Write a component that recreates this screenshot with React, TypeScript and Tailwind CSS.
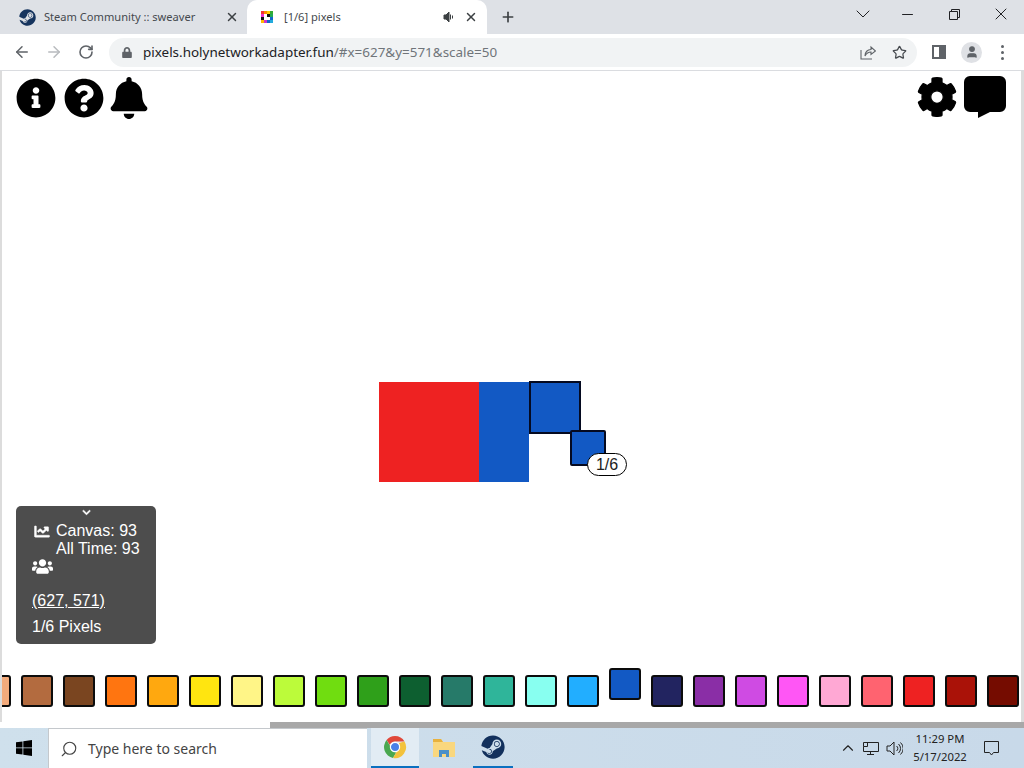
import React from "react";
import { FaInfoCircle, FaQuestionCircle, FaBell, FaCog, FaChartLine, FaUsers, FaChevronDown, FaSteam, FaLock } from "react-icons/fa";
import { Star, RotateCw, ArrowLeft, ArrowRight, X, Plus, ChevronDown, Minus, Search, User, ChevronUp } from "lucide-react";

const colors = ["#f3ab7c","#b36b3f","#7a4520","#ff7510","#ffa80f","#ffe510","#fff587","#bcfb3a","#70dd10","#2fa01a","#0d5f30","#267a69","#2fb59a","#88fff0","#22aeff","#1259c4","#222460","#8a2ea6","#cf4be3","#ff56f5","#ffa8d4","#ff6370","#ee2222","#aa1208","#750c00"];

function ChromeLogo() {
  return (
    <svg width="24" height="24" viewBox="0 0 24 24">
      <path d="M12 1a11 11 0 0 1 9.500 5.500H12a5.500 5.500 0 0 0-5.200 3.600L3.600 5A11 11 0 0 1 12 1z" fill="#e0483a" />
      <path d="M3.600 5l4.800 8.300a5.500 5.500 0 0 0 4.800 4.100L10 22.900A11 11 0 0 1 3.600 5z" fill="#4aa84f" />
      <path d="M21.500 6.500A11 11 0 0 1 10 22.900l4.800-8.200A5.500 5.500 0 0 0 15.800 8z" fill="#f3c23c" />
      <circle cx="12" cy="12" r="4.600" fill="#4a80e8" stroke="#fff" strokeWidth="1.200" />
    </svg>
  );
}

function Favicon() {
  const c = ["#e33","#f80","#fc0","#3a3","#e3c","#fff","#111","#2a5","#111","#fff","#fff","#16c","#fb0","#c3c","#16c","#2ad"];
  return (
    <div className="grid grid-cols-4 w-3 h-3">
      {c.map((x, i) => <div key={i} style={{ background: x }} />)}
    </div>
  );
}

export default function App() {
  return (
    <div className="w-[1024px] h-[768px] flex flex-col overflow-hidden bg-white font-['Noto_Sans','Open_Sans',sans-serif]">
      {/* tab strip */}
      <div className="h-[34px] shrink-0 flex items-center bg-[#dee1e6] text-[11.1px] text-[#45494e]">
        <div className="w-[247px] h-full flex items-center pl-[19px] pr-[8px]">
          <FaSteam className="w-[17px] h-[17px] text-[#16345e]" />
          <span className="ml-2 flex-1 truncate">Steam Community :: sweaver</span>
          <X className="w-[14px] h-[14px] text-[#3c4043]" strokeWidth={2.5} />
        </div>
        <div className="w-[240px] h-full flex items-center pl-[14px] pr-[9px] bg-white rounded-t-[10px]">
          <Favicon />
          <span className="ml-[11px] flex-1">[1/6] pixels</span>
          <svg width="12" height="12" viewBox="0 0 12 12" className="mr-[9px] text-[#3c4043]">
            <path d="M1 4h2l3-3v10L3 8H1z M7.500 3.500v5 M9.500 4.500v3" fill="currentColor" stroke="currentColor" strokeWidth="1" />
          </svg>
          <X className="w-[14px] h-[14px] text-[#3c4043]" strokeWidth={2.5} />
        </div>
        <Plus className="ml-[13px] w-4 h-4 text-[#3c4043]" strokeWidth={2.5} />
        <div className="ml-auto flex items-center text-[#202124] -mt-[6px]">
          <ChevronDown className="w-6 h-6 mr-[24px]" strokeWidth={1} />
          <Minus className="w-[17px] h-[17px] mr-[33px]" strokeWidth={1.5} />
          <svg width="11" height="11" viewBox="0 0 11 11" className="mr-[31px]" fill="none" stroke="currentColor">
            <path d="M.5 2.500h8v8h-8z M2.500 2.500v-2h8v8h-2" />
          </svg>
          <X className="w-5 h-5 mr-[13px]" strokeWidth={1.2} />
        </div>
      </div>
      {/* toolbar */}
      <div className="h-[37px] shrink-0 flex items-center bg-white border-b border-[#dadce0] text-[#5f6368]">
        <ArrowLeft className="ml-[13px] w-[18px] h-[18px]" strokeWidth={2} />
        <ArrowRight className="ml-[14px] w-[18px] h-[18px] text-[#b8bbbe]" strokeWidth={2} />
        <RotateCw className="ml-[15px] w-4 h-4" strokeWidth={2.4} />
        <div className="ml-[15px] w-[808px] h-[29px] rounded-full bg-[#f1f3f4] flex items-center pl-[13px] pr-[10px] text-[13.45px]">
          <FaLock className="w-[10px] h-[11px]" />
          <span className="ml-[11px] text-[#202124]">pixels.holynetworkadapter.fun</span>
          <span className="text-[#70757a]">/#x=627&amp;y=571&amp;scale=50</span>
          <div className="ml-auto flex items-center gap-[16px]">
            <svg width="16" height="16" viewBox="0 0 16 16" fill="none" stroke="currentColor" strokeWidth="1.100">
              <path d="M1 6v9h11 M5 12c0-4 2.500-6.500 6-6.500V3l4.500 4L11 10.500V8c-2.500 0-4.500 1.200-6 4z" />
            </svg>
            <Star className="w-[15px] h-[15px] text-[#45494e]" strokeWidth={2} />
          </div>
        </div>
        <div className="ml-[15px] w-[14px] h-[14px] border-2 border-[#5f6368] flex justify-end"><div className="w-[5px] bg-[#5f6368]" /></div>
        <div className="ml-[15px] w-[21px] h-[21px] rounded-full bg-[#dfe1e5] flex items-center justify-center"><User className="w-[14px] h-[14px] text-[#5f6368] fill-[#5f6368]" /></div>
        <div className="ml-[19px] flex flex-col gap-[3px]">
          <div className="w-[3px] h-[3px] rounded-full bg-[#5f6368]" />
          <div className="w-[3px] h-[3px] rounded-full bg-[#5f6368]" />
          <div className="w-[3px] h-[3px] rounded-full bg-[#5f6368]" />
        </div>
      </div>
      {/* page */}
      <div className="flex-1 min-h-0 relative border-l-2 border-r-[3px] border-[#dcdcdc] bg-white overflow-hidden">
        <div className="absolute left-[14px] top-[6px] flex items-center gap-2 text-black">
          <FaInfoCircle className="w-10 h-10" />
          <FaQuestionCircle className="w-10 h-10" />
          <FaBell className="w-[38px] h-[42px] -ml-[2px]" />
        </div>
        <div className="absolute right-[15px] top-[5px] flex items-center gap-[7px] text-black">
          <FaCog className="w-10 h-10" stroke="currentColor" strokeWidth={16} />
          <svg width="42" height="42" viewBox="0 0 42 42" fill="currentColor">
            <path d="M6 0h30a6 6 0 0 1 6 6v24a6 6 0 0 1-6 6H26l-12 6v-6H6a6 6 0 0 1-6-6V6a6 6 0 0 1 6-6z" />
          </svg>
        </div>

        {/* canvas */}
        <div className="absolute left-[377px] top-[311px] w-[100px] h-[100px] bg-[#ee2222]" />
        <div className="absolute left-[477px] top-[311px] w-[50px] h-[100px] bg-[#1259c4]" />
        <div className="absolute left-[527px] top-[310px] w-[52px] h-[53px] bg-[#1259c4] border-2 border-[#050a20]" />
        <div className="absolute left-[568px] top-[359px] w-[36px] h-[36px] bg-[#1259c4] border-2 border-[#050a20] rounded-[2px]" />
        <div className="absolute left-[585px] top-[382px] w-[40px] h-[23px] rounded-full bg-white border border-black flex items-center justify-center text-[16px] text-[#222] font-['Liberation_Sans',sans-serif]">1/6</div>

        {/* stats */}
        <div className="absolute left-[14px] top-[435px] w-[140px] h-[138px] rounded-[5px] bg-[#4d4d4d] text-white text-[16px] leading-[18px] font-['Liberation_Sans',sans-serif] px-4">
          <div className="flex justify-center h-[14px] pt-[2px]"><FaChevronDown className="w-[11px] h-[9px]" stroke="currentColor" strokeWidth={24} /></div>
          <div className="flex mt-[2px]">
            <FaChartLine className="w-[18px] h-[15px] mt-[2px] ml-[1px]" stroke="currentColor" strokeWidth={16} />
            <div className="ml-[5px] whitespace-nowrap">
              <div>Canvas: 93</div>
              <div>All Time: 93</div>
            </div>
          </div>
          <FaUsers className="w-[21px] h-[17px]" />
          <div className="mt-[17px] underline">(627, 571)</div>
          <div className="mt-[8px]">1/6 Pixels</div>
        </div>

        {/* palette */}
        <div className="absolute -left-[23px] top-[604px] flex items-start gap-[10px]">
          {colors.map((c, i) => (
            <div key={c} style={{ background: c }} className={`w-[32px] h-[32px] shrink-0 rounded-[3px] border-2 border-[#0c0c0c] ${i === 15 ? "-mt-[7px]" : ""}`} />
          ))}
        </div>
      </div>
      {/* scrollbar */}
      <div className="h-[6px] shrink-0 bg-white"><div className="ml-[270px] h-full bg-[#a8a8a8]" /></div>
      {/* taskbar */}
      <div className="h-[40px] shrink-0 flex items-center bg-gradient-to-r from-[#cfe0ec] to-[#c8d9e9] text-black">
        <div className="w-[48px] flex justify-center">
          <svg width="16" height="16" viewBox="0 0 16 16" fill="#000"><path d="M0 2.300l6.500-.9v6.100H0z M7.300 1.300L16 0v7.500H7.300z M0 8.300h6.500v6.200L0 13.700z M7.300 8.300H16V16l-8.700-1.200z" /></svg>
        </div>
        <div className="w-[319px] h-full bg-white border-t border-l border-[#c4c8cc] flex items-center pl-[11px] text-[14px] text-[#444]">
          <Search className="w-[18px] h-[18px] -scale-x-100" strokeWidth={1.5} />
          <span className="ml-[10px]">Type here to search</span>
        </div>
        <div className="ml-[4px] w-[48px] h-full bg-[#e2ecf4] border-b-2 border-[#0a70c0] flex items-center justify-center"><ChromeLogo /></div>
        <div className="w-[49px] h-full flex items-center justify-center">
          <svg width="24" height="22" viewBox="0 0 24 22">
            <path d="M1 2h8l2 3h12v15H1z" fill="#f9d77e" />
            <path d="M1 2h8l2 3H1z" fill="#e8b23e" />
            <path d="M7 13h10v7h-3v-3h-4v3H7z" fill="#4a90c8" />
          </svg>
        </div>
        <div className="w-[45px] h-full pl-[5px]">
          <div className="w-[40px] h-full border-b-2 border-[#0a70c0] flex items-center justify-center"><FaSteam className="w-[24px] h-[24px] text-[#12305c]" /></div>
        </div>
        <div className="ml-auto flex items-center text-[#222]">
          <ChevronUp className="w-[18px] h-[18px]" strokeWidth={1.5} />
          <svg width="17" height="15" viewBox="0 0 17 15" fill="none" stroke="currentColor" className="ml-[5px]">
            <path d="M4.500 1.500h12v9h-15v-5 M8.500 10.500v3 M5 13.500h7" /><path d="M1.500 1.500h4v4h-4z" />
          </svg>
          <svg width="17" height="15" viewBox="0 0 17 15" fill="none" stroke="currentColor" className="ml-[7px]">
            <path d="M1 5h3l4-4v13l-4-4H1z M10.500 5a3 3 0 0 1 0 5 M12.500 3a6 6 0 0 1 0 9 M14.500 1.500a8 8 0 0 1 0 12" />
          </svg>
          <div className="ml-[5px] w-[64px] text-center text-[11.3px] leading-[18px] text-[#222]">
            <div>11:29 PM</div>
            <div>5/17/2022</div>
          </div>
          <svg width="17" height="17" viewBox="0 0 17 17" fill="none" stroke="currentColor" className="ml-[11px] mr-[24px]">
            <path d="M1.500 1.500h14v11h-5l-2 2.500-2-2.500h-5z" />
          </svg>
        </div>
      </div>
    </div>
  );
}
